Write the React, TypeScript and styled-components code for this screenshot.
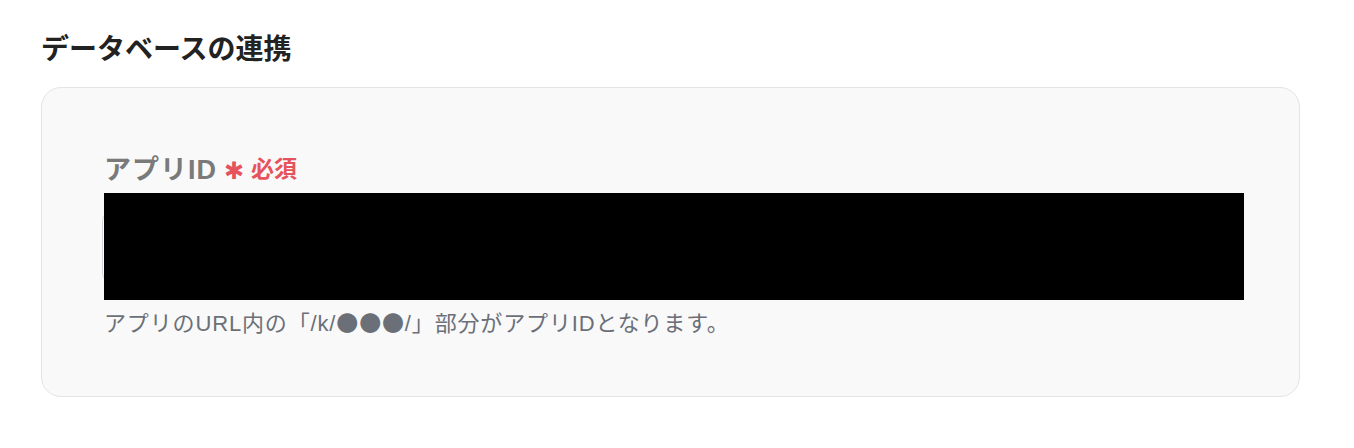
import { FC } from 'react';
import styled, { createGlobalStyle } from 'styled-components';

const GlobalStyle = createGlobalStyle`
  body {
    margin: 0;
    background: #ffffff;
    font-family: 'Liberation Sans', 'Noto Sans CJK JP', sans-serif;
  }
`;

const SPage = styled.div`
  width: 1354px;
  height: 448px;
  box-sizing: border-box;
  padding: 30px 54px 0 41px;
`;
const STitle = styled.h2`
  margin: 0 0 17px;
  font-size: 28px;
  line-height: 40px;
  font-weight: 700;
  color: #222222;
`;
const SCard = styled.div`
  box-sizing: border-box;
  height: 310px;
  border: 1.5px solid #e2e4e8;
  border-radius: 20px;
  background: #f9f9f9;
  padding: 62px 54px 0 62px;
`;
const SLabel = styled.div`
  display: flex;
  align-items: center;
  gap: 7px;
  height: 34px;
  font-size: 27px;
  font-weight: 700;
  letter-spacing: 1px;
  color: #7a7a7a;
`;
const SRequired = styled.span`
  display: flex;
  align-items: center;
  gap: 7px;
  color: #e5535c;
  font-size: 23px;
  letter-spacing: 0;
`;
const SAsterisk = styled.span`
  font-family: 'DejaVu Sans', sans-serif;
  font-size: 24px;
  line-height: 1;
  margin-top: 7px;
`;
const SField = styled.div`
  position: relative;
  height: 107px;
  margin-top: 9px;
  display: flex;
  align-items: center;
`;
const SInput = styled.input`
  box-sizing: border-box;
  width: 100%;
  height: 72px;
  margin-left: -2px;
  border: 1.5px solid #d3d7dd;
  border-radius: 10px;
  background: #ffffff;
  padding: 0 16px;
  font-size: 18px;
  font-family: inherit;
  outline: none;
`;
const SRedaction = styled.div`
  position: absolute;
  top: 0;
  bottom: 0;
  left: 0;
  width: 1140px;
  background: #000000;
`;
const SHelp = styled.p`
  margin: 6px 0 0;
  font-size: 22px;
  line-height: 30px;
  letter-spacing: 0.85px;
  color: #6b7078;
`;
const SDots = styled.span`
  font-family: 'Noto Sans CJK JP', sans-serif;
`;

const App: FC = () => {
  return (
    <SPage>
      <GlobalStyle />
      <STitle>データベースの連携</STitle>
      <SCard>
        <SLabel>
          アプリID
          <SRequired>
            <SAsterisk>✱</SAsterisk>
            必須
          </SRequired>
        </SLabel>
        <SField>
          <SInput type="text" aria-label="アプリID" />
          <SRedaction />
        </SField>
        <SHelp>
          アプリのURL内の「/k/<SDots>●●●</SDots>/」部分がアプリIDとなります。
        </SHelp>
      </SCard>
    </SPage>
  );
};

export default App;
